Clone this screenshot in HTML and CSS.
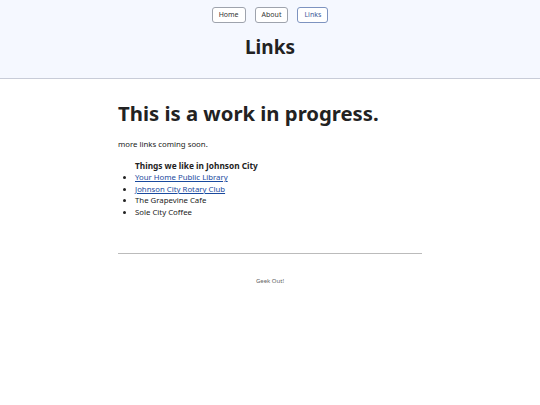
FILE: index.html
```html
<!DOCTYPE html>
<html lang="en">
<head>
<meta charset="utf-8">
<title>Links</title>
<link rel="stylesheet" href="styles.css">
</head>
<body>
<header class="site-header">
  <nav class="nav">
    <a class="nav-btn" href="#">Home</a>
    <a class="nav-btn" href="#">About</a>
    <a class="nav-btn active" href="#">Links</a>
  </nav>
  <h1 class="page-title">Links</h1>
</header>
<main class="content">
  <h2 class="headline">This is a work in progress.</h2>
  <p class="intro">more links coming soon.</p>
  <ul class="link-list">
    <li class="list-title">Things we like in Johnson City</li>
    <li><a href="#">Your Home Public Library</a></li>
    <li><a href="#">Johnson City Rotary Club</a></li>
    <li>The Grapevine Cafe</li>
    <li>Sole City Coffee</li>
  </ul>
  <hr class="rule">
  <footer class="footer">Geek Out!</footer>
</main>
</body>
</html>
```
FILE: styles.css
```css
* { box-sizing: border-box; }
body {
  margin: 0;
  font-family: "Noto Sans", "Open Sans", sans-serif;
  color: #222;
  background: #fff;
}
.site-header {
  background: #f5f8ff;
  border-bottom: 1px solid #c8ccd8;
  height: 79px;
  padding-top: 7px;
  text-align: center;
}
.nav {
  display: flex;
  justify-content: center;
  gap: 9px;
}
.nav-btn {
  display: inline-block;
  height: 16px;
  line-height: 14px;
  padding: 0 6px;
  font-size: 7px;
  color: #333;
  text-decoration: none;
  border: 1px solid #9ea3ad;
  border-radius: 3px;
  background: #fff;
}
.nav-btn.active {
  color: #3b5998;
  border-color: #7d93c0;
}
.page-title {
  margin: 11px 0 0;
  font-size: 19px;
  line-height: 26px;
  font-weight: 700;
}
.content {
  width: 304px;
  margin: 0 auto;
}
.headline {
  margin: 21px 0 0;
  font-size: 20.3px;
  line-height: 26px;
  font-weight: 700;
}
.intro {
  margin: 12px 0 0;
  font-size: 7.8px;
  line-height: 12px;
}
.link-list {
  margin: 10px 0 0;
  padding-left: 17px;
  font-size: 7.8px;
  line-height: 11.8px;
}
.list-title {
  list-style: none;
  font-weight: 700;
  font-size: 8.3px;
}
.link-list a { color: #1a4a9e; }
.rule {
  margin: 34px 0 0;
  border: 0;
  border-top: 1px solid #bbb;
}
.footer {
  margin-top: 23px;
  text-align: center;
  font-size: 6px;
  line-height: 9px;
  color: #666;
}
```
